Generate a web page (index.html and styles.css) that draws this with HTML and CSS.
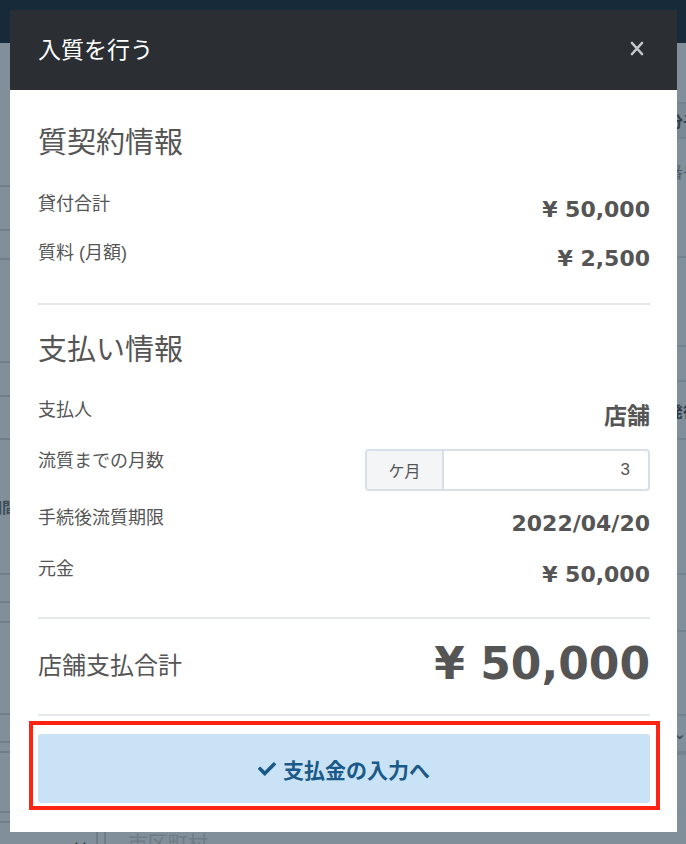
FILE: index.html
```html
<!DOCTYPE html>
<html lang="ja">
<head>
<meta charset="utf-8">
<title>入質を行う</title>
<link rel="stylesheet" href="styles.css">
</head>
<body>
<div class="page">
  <header class="topbar"></header>
  <div class="page-main">
    <div class="pane-left">
      <div class="bg-row h144"></div>
      <div class="bg-row h44"></div>
      <div class="bg-row h29"></div>
      <div class="bg-row h103"></div>
      <div class="bg-row h34"></div>
      <div class="bg-row h43"></div>
      <div class="bg-row h135 bg-text-row"><span class="bg-text">期間</span></div>
      <div class="bg-row h28"></div>
      <div class="bg-row h20"></div>
      <div class="bg-row h92"></div>
      <div class="bg-row h28"></div>
      <div class="bg-row h10"></div>
      <div class="bg-row h60"></div>
      <div class="bg-row h10"></div>
      <div class="bg-row last-row"><span class="bg-sort">▲▲</span><span class="bg-vline"></span><span class="bg-city">市区町村</span></div>
    </div>
    <div class="pane-right">
      <div class="rbg-row h61"></div>
      <div class="rbg-row h35 band"><span class="rbg-text">分子</span></div>
      <div class="rbg-row h119"><span class="rbg-text sm">番号</span></div>
      <div class="rbg-row h89"></div>
      <div class="rbg-row h35"></div>
      <div class="rbg-row h58"><span class="rbg-text">発行</span></div>
      <div class="rbg-row h135"></div>
      <div class="rbg-row h57"></div>
      <div class="rbg-row h84"></div>
      <div class="rbg-row h37"><span class="rbg-chev">⌄</span></div>
      <div class="rbg-row"></div>
    </div>
  </div>
</div>

<div class="modal">
  <div class="modal-header">
    <h1 class="modal-title">入質を行う</h1>
    <svg class="close-icon" width="14" height="15" viewBox="0 0 14 15" aria-label="閉じる">
      <path d="M2 2 L12 13 M12 2 L2 13" stroke="#c6c9cc" stroke-width="2.6" stroke-linecap="round"/>
    </svg>
  </div>
  <div class="modal-body">
    <section class="section sec-contract">
      <h2 class="sec-title">質契約情報</h2>
      <div class="rows rows-tight">
        <div class="row"><span class="label">貸付合計</span><span class="value">¥ 50,000</span></div>
        <div class="row"><span class="label">質料 (月額)</span><span class="value">¥ 2,500</span></div>
      </div>
    </section>
    <section class="section sec-payment">
      <h2 class="sec-title">支払い情報</h2>
      <div class="rows rows-loose">
        <div class="row"><span class="label">支払人</span><span class="value cjk">店舗</span></div>
        <div class="row">
          <span class="label">流質までの月数</span>
          <div class="input-group">
            <span class="addon">ケ月</span>
            <span class="input-field">3</span>
          </div>
        </div>
        <div class="row"><span class="label">手続後流質期限</span><span class="value">2022/04/20</span></div>
        <div class="row"><span class="label">元金</span><span class="value">¥ 50,000</span></div>
      </div>
    </section>
    <section class="section sec-total">
      <div class="row total-row">
        <span class="total-label">店舗支払合計</span>
        <span class="total-value">¥ 50,000</span>
      </div>
    </section>
    <div class="modal-footer">
      <div class="highlight">
        <button class="btn-primary" type="button">
          <svg class="check-icon" width="18" height="18" viewBox="0 0 512 512"><path fill="#1b5a88" d="M173.9 439.4l-166.4-166.4c-10-10-10-26.2 0-36.2l36.2-36.2c10-10 26.2-10 36.2 0L192 312.7 432.1 72.6c10-10 26.2-10 36.2 0l36.2 36.2c10 10 10 26.2 0 36.2l-294.4 294.4c-10 10-26.2 10-36.2 0z"/></svg>
          <span>支払金の入力へ</span>
        </button>
      </div>
    </div>
  </div>
</div>
</body>
</html>
```

FILE: styles.css
```css
* { box-sizing: border-box; }

html, body {
  margin: 0;
  padding: 0;
  width: 686px;
  height: 844px;
  overflow: hidden;
  background: #808f99;
  font-family: "Liberation Sans", "Noto Sans CJK JP", sans-serif;
}

/* ---------- background page (under overlay) ---------- */
.page {
  width: 686px;
  height: 844px;
  display: flex;
  flex-direction: column;
}

.topbar {
  height: 43px;
  background: #172a3a;
  flex: none;
}

.page-main {
  flex: 1;
  display: flex;
  overflow: hidden;
}

.pane-left {
  flex: 1;
  display: flex;
  flex-direction: column;
}

.pane-right {
  width: 300px;
  display: flex;
  flex-direction: column;
}

.bg-row, .rbg-row {
  flex: none;
  border-bottom: 2px solid #6f7e88;
  position: relative;
}

.rbg-row { border-bottom-color: #74838d; }
.band { background: #7a8993; }

.h10 { height: 10px; }
.h20 { height: 20px; }
.h28 { height: 28px; }
.h29 { height: 29px; }
.h34 { height: 34px; }
.h35 { height: 35px; }
.h37 { height: 37px; }
.h43 { height: 43px; }
.h44 { height: 44px; }
.h57 { height: 57px; }
.h58 { height: 58px; }
.h60 { height: 60px; }
.h61 { height: 61px; }
.h84 { height: 84px; }
.h89 { height: 89px; }
.h92 { height: 92px; }
.h103 { height: 103px; }
.h119 { height: 119px; }
.h135 { height: 135px; }
.h144 { height: 144px; }

.bg-text-row {
  display: flex;
  align-items: center;
}

.bg-text {
  margin-left: -13px;
  font-size: 15px;
  font-weight: 700;
  color: #3c4b57;
}

.rbg-row {
  display: flex;
  align-items: center;
  justify-content: flex-end;
  padding-right: 0;
}

.rbg-text {
  margin-right: -12px;
  font-size: 15px;
  font-weight: 700;
  color: #2f3d48;
}

.rbg-text.sm {
  align-self: flex-start;
  margin-top: 22px;
  font-weight: 400;
  color: #4b5a65;
}

.rbg-chev {
  margin-right: 0;
  font-size: 16px;
  color: #36444f;
}

.last-row {
  flex: 1;
  border-bottom: none;
  display: flex;
  align-items: flex-start;
  padding-top: 8px;
}

.bg-sort {
  margin-left: 72px;
  font-size: 9px;
  color: #2d3a44;
  letter-spacing: -1px;
  margin-top: 8px;
}

.bg-vline {
  width: 10px;
  height: 40px;
  margin-left: 8px;
  margin-top: -8px;
  border-left: 2px solid #6f7e88;
  border-right: 2px solid #6f7e88;
}

.bg-city {
  margin-left: 22px;
  font-size: 20px;
  color: #6e7c86;
  font-family: "Noto Sans CJK JP", sans-serif;
  line-height: 24px;
}

/* ---------- modal ---------- */
.modal {
  position: absolute;
  top: 10px;
  left: 10px;
  width: 667px;
  background: #ffffff;
}

.modal-header {
  height: 80px;
  background: #2b2f33;
  display: flex;
  align-items: center;
  justify-content: space-between;
  padding: 0 33px 0 28px;
}

.modal-title {
  margin: 0;
  font-family: "Noto Sans CJK JP", sans-serif;
  font-size: 23px;
  font-weight: 400;
  color: #ffffff;
  line-height: 30px;
  margin-top: -4px;
}

.close-icon { display: block; margin-top: -3px; }

.modal-body {
  padding: 0 27px 0 28px;
}

.section {
  border-bottom: 2px solid #e4e7eb;
}

.sec-contract { padding: 30px 0 26px; }
.sec-payment { padding: 22px 0 24px; }
.sec-total { padding: 19px 0 24px; }

.sec-title {
  margin: 0;
  font-family: "Noto Sans CJK JP", sans-serif;
  font-size: 29px;
  line-height: 40px;
  font-weight: 400;
  color: #555555;
}

.sec-contract .sec-title { margin-bottom: 32px; }
.sec-payment .sec-title { margin-bottom: 31px; }

.rows {
  display: flex;
  flex-direction: column;
}

.rows-tight { gap: 13px; }
.rows-loose { gap: 15px; }

.row {
  display: flex;
  justify-content: space-between;
  align-items: flex-start;
}

.label {
  font-size: 18px;
  line-height: 24px;
  color: #555555;
}

.value {
  font-family: "DejaVu Sans", "Noto Sans CJK JP", sans-serif;
  font-weight: 700;
  font-size: 22px;
  line-height: 36px;
  color: #555555;
}

.value.cjk {
  font-family: "Noto Sans CJK JP", sans-serif;
  font-size: 23px;
  line-height: 32px;
  padding-bottom: 4px;
}

.input-group {
  width: 285px;
  height: 42px;
  display: flex;
  border: 2px solid #d8dfe7;
  border-radius: 4px;
  overflow: hidden;
}

.addon {
  width: 77px;
  background: #f4f5f7;
  border-right: 2px solid #d8dfe7;
  display: flex;
  align-items: center;
  justify-content: center;
  font-family: "Noto Sans CJK JP", sans-serif;
  font-size: 16px;
  color: #555555;
}

.input-field {
  flex: 1;
  display: flex;
  align-items: center;
  justify-content: flex-end;
  padding-right: 18px;
  font-size: 17px;
  color: #555555;
}

.total-row { align-items: center; }

.total-label {
  font-family: "Noto Sans CJK JP", sans-serif;
  font-size: 24px;
  line-height: 52px;
  color: #555555;
}

.total-value {
  font-family: "DejaVu Sans", sans-serif;
  font-weight: 700;
  font-size: 44px;
  line-height: 52px;
  color: #555555;
}

.modal-footer {
  padding: 5px 0 22px;
  border: none;
}

.highlight {
  margin: 0 -10px 0 -9px;
  border: 4px solid #ff2314;
  padding: 9px 6px 3px 5px;
}

.btn-primary {
  width: 100%;
  height: 69px;
  border: none;
  border-radius: 3px;
  background: #c9e2f6;
  color: #1b5a88;
  display: flex;
  align-items: center;
  justify-content: center;
  gap: 7px;
  font-family: "Noto Sans CJK JP", sans-serif;
  font-weight: 700;
  font-size: 21px;
  padding: 0;
  cursor: pointer;
}

.check-icon { display: block; }
```
